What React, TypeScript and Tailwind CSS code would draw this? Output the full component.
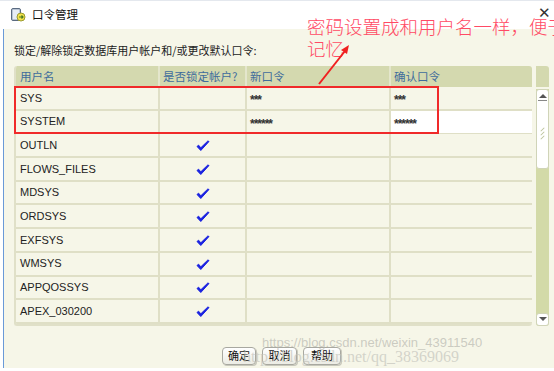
import React from "react";

interface UserRow {
  name: string;
  locked: boolean;
  pwd: string;
  confirm: string;
}

const rows: UserRow[] = [
  { name: "SYS", locked: false, pwd: "***", confirm: "***" },
  { name: "SYSTEM", locked: false, pwd: "******", confirm: "******" },
  { name: "OUTLN", locked: true, pwd: "", confirm: "" },
  { name: "FLOWS_FILES", locked: true, pwd: "", confirm: "" },
  { name: "MDSYS", locked: true, pwd: "", confirm: "" },
  { name: "ORDSYS", locked: true, pwd: "", confirm: "" },
  { name: "EXFSYS", locked: true, pwd: "", confirm: "" },
  { name: "WMSYS", locked: true, pwd: "", confirm: "" },
  { name: "APPQOSSYS", locked: true, pwd: "", confirm: "" },
  { name: "APEX_030200", locked: true, pwd: "", confirm: "" },
];

const cjk = { fontFamily: '"Noto Sans CJK SC", "Noto Sans", sans-serif' };
const latin = { fontFamily: '"Liberation Sans", Arial, sans-serif' };

const Check = () => (
  <svg width="14" height="12" viewBox="0 0 14 12">
    <path d="M1 6.5 L4.8 10.5 L13 1.5 L11.8 1 L4.8 7.8 L2.6 5.2 Z" fill="#1a22e0" stroke="#1a22e0" strokeWidth="1" strokeLinejoin="round" />
  </svg>
);

const TitleIcon = () => (
  <svg width="16" height="16" viewBox="0 0 16 16">
    <rect x="1.5" y="1.5" width="9" height="12" rx="1.5" fill="#b8c4d4" stroke="#5a6a80" />
    <rect x="3" y="3" width="6" height="9" fill="#e6ecf4" />
    <circle cx="11" cy="10" r="4" fill="#f4e24a" stroke="#9a9a30" />
    <path d="M9 10 H13 M11.5 8.5 L13 10 L11.5 11.5" stroke="#4a7a20" strokeWidth="1.2" fill="none" />
  </svg>
);

const Btn = ({ label, w }: { label: string; w: string }) => (
  <button
    className={`${w} h-[18px] rounded-[4px] border border-[#a8a8a0] bg-gradient-to-b from-white to-[#ecece4] text-[11px] text-[#111] shadow-[1px_1px_0_#c8c8bc] leading-none`}
    style={cjk}
  >
    {label}
  </button>
);

export default function App() {
  return (
    <div className="relative w-[554px] h-[371px] overflow-hidden bg-white">
      {/* title bar */}
      <div className="h-[29px] border-t border-[#e4e8ee] flex items-center pl-[10px] gap-[6px] bg-white">
        <TitleIcon />
        <span className="text-[11.5px] text-[#111]" style={cjk}>
          口令管理
        </span>
      </div>
      <div className="absolute right-[3px] top-[5px] text-[15px] text-[#333] leading-none" style={latin}>
        ✕
      </div>

      {/* body */}
      <div className="ml-[3px] h-[339px] border-l-[1.5px] border-[#6a9ad8] bg-[#f6f6e8] pl-[10px] pt-[13px]">
        <div className="text-[11px] text-[#222] h-[24px]" style={cjk}>
          锁定/解除锁定数据库用户帐户和/或更改默认口令:
        </div>

        <div className="flex gap-[4px]">
          <div className="w-[518px] rounded-[3px] overflow-hidden border-b-2 border-l-2 border-[#e0e0c8]">
            <div className="grid grid-cols-[144px_87px_144px_143px] h-[21px] bg-[#d4d9af] text-[11.5px] text-[#3f6c9c]" style={cjk}>
              <div className="pl-[4px] flex items-center border-r-2 border-[#e4e6cc]">用户名</div>
              <div className="pl-[3px] flex items-center border-r-2 border-[#e4e6cc]">是否锁定帐户?</div>
              <div className="pl-[3px] flex items-center border-r-2 border-[#e4e6cc]">新口令</div>
              <div className="pl-[3px] flex items-center">确认口令</div>
            </div>
            {rows.map((r) => (
              <div
                key={r.name}
                className="grid grid-cols-[144px_87px_144px_143px] h-[23.7px] border-b-2 border-[#dfdfc6] text-[11px] text-[#222]"
                style={latin}
              >
                <div className="pl-[4px] flex items-center border-r-2 border-[#dfdfc6]">{r.name}</div>
                <div className="flex items-center justify-center border-r-2 border-[#dfdfc6] pt-[2px]">
                  {r.locked && <Check />}
                </div>
                <div className="pl-[3px] flex items-start pt-[4px] border-r-2 border-[#dfdfc6] text-[12px] font-bold tracking-[-1px] text-[#333]">
                  {r.pwd}
                </div>
                <div
                  className={`pl-[3px] flex items-start pt-[4px] text-[12px] font-bold tracking-[-1px] text-[#333] ${
                    r.name === "SYSTEM" ? "bg-white" : ""
                  }`}
                >
                  {r.confirm}
                </div>
              </div>
            ))}
          </div>

          {/* scrollbar */}
          <div className="w-[13px] flex flex-col">
            <div className="h-[21px] bg-[#d4d9af] rounded-tr-[3px]" />
            <div className="mt-[2px] flex-1 bg-[#d3daa8] flex flex-col rounded-b-[3px]">
              <div className="h-[80px] bg-white rounded-[3px] border border-[#d0d4b8] flex flex-col items-center">
                <div className="mt-[4px] w-0 h-0 border-l-[4px] border-r-[4px] border-b-[4px] border-l-transparent border-r-transparent border-b-[#555]" />
                <div className="w-[9px] h-[1px] bg-[#888] mt-[2px]" />
                <div className="mt-[28px] flex flex-col gap-[3px] items-center">
                  <div className="w-[5px] h-[1px] bg-[#bcc29a] -rotate-45" />
                  <div className="w-[5px] h-[1px] bg-[#bcc29a] -rotate-45" />
                  <div className="w-[5px] h-[1px] bg-[#bcc29a] -rotate-45" />
                </div>
              </div>
              <div className="flex-1" />
              <div className="h-[13px] bg-white rounded-[3px] border border-[#d0d4b8] flex items-center justify-center">
                <div className="w-0 h-0 border-l-[4px] border-r-[4px] border-t-[4px] border-l-transparent border-r-transparent border-t-[#555]" />
              </div>
            </div>
          </div>
        </div>

        <div className="flex gap-[6px] pl-[208px] mt-[21px]">
          <Btn label="确定" w="w-[34px]" />
          <Btn label="取消" w="w-[35px]" />
          <Btn label="帮助" w="w-[38px]" />
        </div>
      </div>

      {/* annotation */}
      <div className="absolute left-[14px] top-[86px] w-[425px] h-[48px] border-2 border-[#f02a2a] pointer-events-none" />
      <div
        className="absolute left-[307px] top-[15px] text-[18.5px] leading-[22px] text-[#ff4a64] whitespace-nowrap font-light"
        style={cjk}
      >
        密码设置成和用户名一样，便于
        <br />
        记忆
      </div>
      <svg className="absolute left-0 top-0 pointer-events-none" width="554" height="371">
        <line x1="319" y1="84" x2="345" y2="51" stroke="#f02020" strokeWidth="2" />
        <path d="M349 45 L341 50 L347 54 Z" fill="#f02020" />
      </svg>

      {/* watermarks */}
      <div
        className="absolute left-[262px] top-[333px] text-[13px] text-[#b8b8b0]/70 whitespace-nowrap pointer-events-none"
        style={latin}
      >
        https://blog.csdn.net/weixin_43911540
      </div>
      <div
        className="absolute left-[243px] top-[345px] text-[16px] text-[#c4c4bc]/70 whitespace-nowrap pointer-events-none"
        style={{ fontFamily: '"Liberation Serif", serif' }}
      >
        http://blog.csdn.net/qq_38369069
      </div>
    </div>
  );
}
